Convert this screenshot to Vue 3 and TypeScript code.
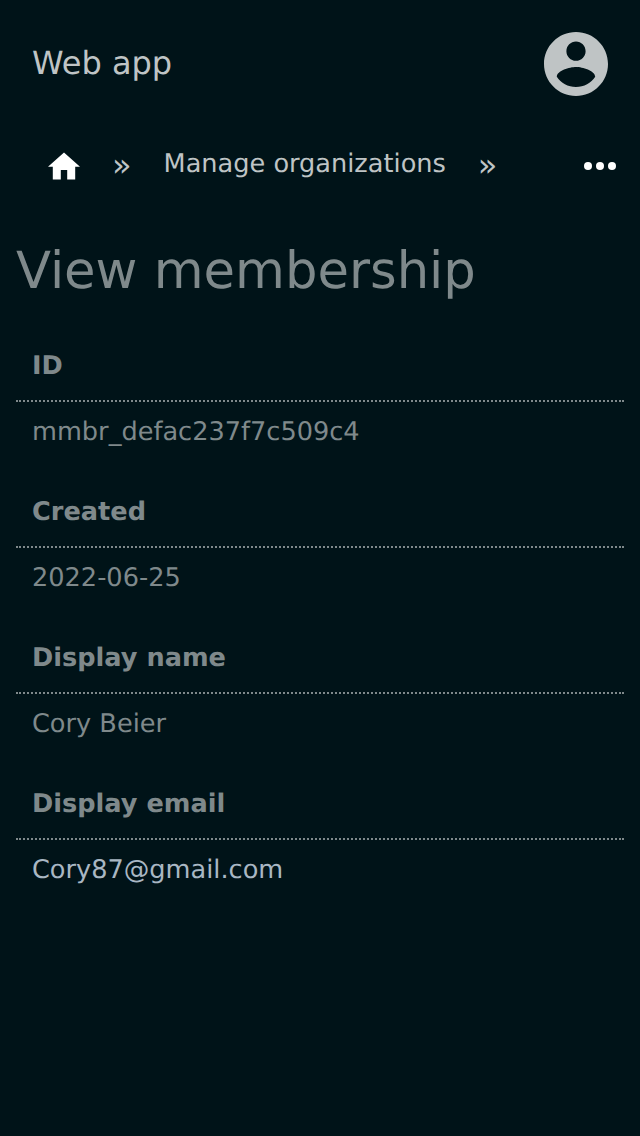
<script setup lang="ts">
interface Field { label: string; value: string; link?: boolean }
const fields: Field[] = [
  { label: 'ID', value: 'mmbr_defac237f7c509c4' },
  { label: 'Created', value: '2022-06-25' },
  { label: 'Display name', value: 'Cory Beier' },
  { label: 'Display email', value: 'Cory87@gmail.com', link: true },
]
</script>

<template>
  <div class="page">
    <header class="top">
      <a class="brand">Web app</a>
      <svg class="avatar" viewBox="2 2 20 20"><path fill="currentColor" d="M12 2C6.48 2 2 6.48 2 12s4.48 10 10 10 10-4.48 10-10S17.52 2 12 2zm0 3c1.66 0 3 1.34 3 3s-1.34 3-3 3-3-1.34-3-3 1.34-3 3-3zm0 14.2c-2.5 0-4.71-1.28-6-3.22.03-1.99 4-3.08 6-3.08 1.99 0 5.97 1.09 6 3.08-1.29 1.94-3.5 3.22-6 3.22z" /></svg>
    </header>
    <nav class="crumbs">
      <svg class="home" viewBox="2 3 20 17"><path fill="currentColor" d="M10 20v-6h4v6h5v-8h3L12 3 2 12h3v8z" /></svg>
      <span class="sep">»</span>
      <a class="crumb">Manage organizations</a>
      <span class="sep">»</span>
      <svg class="more" viewBox="0 0 32 8"><g fill="currentColor"><circle cx="4" cy="4" r="4" /><circle cx="16" cy="4" r="4" /><circle cx="28" cy="4" r="4" /></g></svg>
    </nav>
    <main>
      <h1>View membership</h1>
      <dl>
        <template v-for="f in fields" :key="f.label">
          <dt>{{ f.label }}</dt>
          <dd :class="{ link: f.link }">{{ f.value }}</dd>
        </template>
      </dl>
    </main>
  </div>
</template>

<style>
html, body { background: #001318; }
</style>

<style scoped>
.page { min-height: 1136px; box-sizing: border-box; background: #001318; color: #7f898b; font-family: "DejaVu Sans", sans-serif; font-size: 25.6px; text-rendering: geometricPrecision; }
.top { height: 128px; padding: 0 32px; display: flex; align-items: center; justify-content: space-between; color: #bfc4c5; }
.brand { font-size: 32px; line-height: 38px; padding-bottom: 2px; }
.avatar { width: 64px; height: 64px; }
.crumbs { height: 76px; display: flex; align-items: center; padding: 0 24px 0 48px; box-sizing: border-box; color: #bfc4c5; }
.home { width: 32px; height: 28px; color: #fff; }
.sep { margin-left: 32px; font-size: 32px; line-height: 38px; padding-bottom: 2px; }
.crumb { margin-left: 32px; line-height: 30px; padding-bottom: 4px; white-space: nowrap; }
.more { width: 32px; height: 8px; margin-left: auto; color: #fff; }
main { padding: 37px 16px 0; }
h1 { margin: 0; font-size: 51.2px; font-weight: 400; line-height: 60px; }
dl { margin: 27px 0 0; }
dt { height: 74px; box-sizing: border-box; padding: 23px 16px 0; line-height: 30px; font-weight: 700; border-bottom: 2px dotted #7f898b; }
dd { height: 72px; box-sizing: border-box; margin: 0; padding: 15px 16px 0; line-height: 30px; }
.link { color: #a9b7c3; }
</style>
